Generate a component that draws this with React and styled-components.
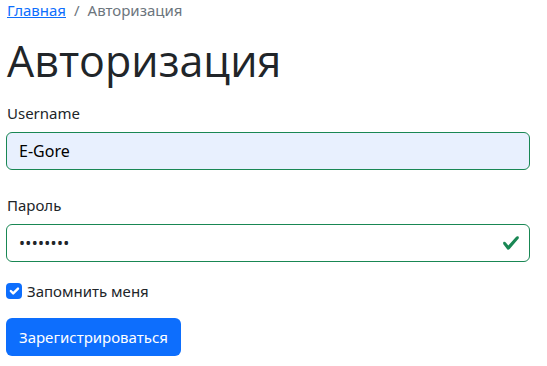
import React from 'react'
import styled, { createGlobalStyle } from 'styled-components'

const GlobalStyle = createGlobalStyle`
  body {
    margin: 0;
    background: #fff;
    color: #212529;
    font-family: "Noto Sans", "Open Sans", sans-serif;
    font-size: 15px;
    line-height: 22px;
  }
  * { box-sizing: border-box; }
`

function CheckMark() {
  return (
    <svg width="18" height="18" viewBox="0 0 8 8">
      <path fill="#198754" d="M2.3 6.73.6 4.53c-.4-1.04.46-1.4 1.1-.8l1.1 1.4 3.4-3.8c.6-.63 1.6-.27 1.2.7l-4 4.6c-.43.5-.8.4-1.1.1z" />
    </svg>
  )
}

function BoxTick() {
  return (
    <svg width="16" height="16" viewBox="0 0 20 20">
      <path fill="none" stroke="#fff" strokeLinecap="round" strokeLinejoin="round" strokeWidth="3" d="m6 10 3 3 6-6" />
    </svg>
  )
}

export default function App() {
  return (
    <>
      <GlobalStyle />
      <Page>
        <Breadcrumb>
          <Crumb href="#">Главная</Crumb>
          <Divider>/</Divider>
          <Current>Авторизация</Current>
        </Breadcrumb>
        <Title>Авторизация</Title>
        <Field>
          <Label>Username</Label>
          <InputBox autofill>
            <InputText>E-Gore</InputText>
          </InputBox>
        </Field>
        <Field>
          <Label>Пароль</Label>
          <InputBox>
            <Dots>••••••••</Dots>
            <CheckMark />
          </InputBox>
        </Field>
        <CheckRow>
          <Box><BoxTick /></Box>
          <span>Запомнить меня</span>
        </CheckRow>
        <Button>Зарегистрироваться</Button>
      </Page>
    </>
  )
}

const Page = styled.div`
  width: 530px;
  padding: 0 0 0 6px;
`

const Breadcrumb = styled.nav`
  display: flex;
  align-items: center;
  padding-left: 1px;
  height: 22px;
  margin-top: -1px;
  margin-bottom: 14px;
`

const Crumb = styled.a`
  color: #0d6efd;
  text-decoration: underline;
`

const Divider = styled.span`
  color: #6c757d;
  padding: 0 8px;
`

const Current = styled.span`
  color: #6c757d;
`

const Title = styled.h1`
  margin: 0 0 16px;
  padding-left: 1px;
  font-family: "Open Sans", sans-serif;
  font-weight: 400;
  font-size: 43px;
  line-height: 51px;
  color: #212529;
`

const Field = styled.div`
  margin-bottom: 24px;
`

const Label = styled.div`
  margin-bottom: 8px;
  padding-left: 1px;
`

const InputBox = styled.div`
  display: flex;
  align-items: center;
  justify-content: space-between;
  height: 38px;
  padding: 0 9px 0 12px;
  border: 1px solid #198754;
  border-radius: 6px;
  background: ${p => (p.autofill ? '#e8f0fe' : '#fff')};
`

const InputText = styled.span`
  color: #000;
  font-size: 16px;
`

const Dots = styled.span`
  color: #212529;
  font-size: 16px;
  letter-spacing: 0.3px;
`

const CheckRow = styled.label`
  display: flex;
  align-items: center;
  gap: 5px;
  margin-top: -6px;
  margin-bottom: 16px;
`

const Box = styled.span`
  display: flex;
  width: 16px;
  height: 16px;
  border-radius: 4px;
  background: #0d6efd;
`

const Button = styled.button`
  display: block;
  height: 38px;
  padding: 0 13px;
  border: 0;
  border-radius: 6px;
  background: #0d6efd;
  color: #fff;
  font-family: inherit;
  font-size: 15px;
`
